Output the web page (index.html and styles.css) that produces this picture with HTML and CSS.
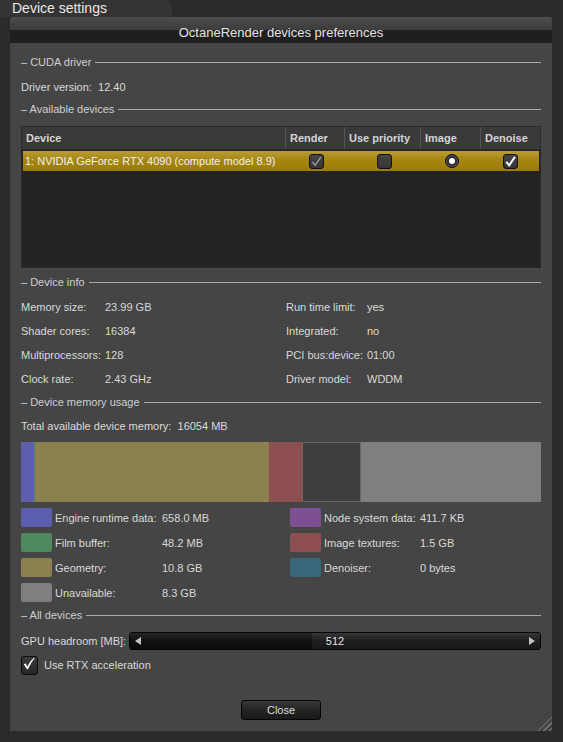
FILE: index.html
```html
<!DOCTYPE html>
<html lang="en">
  <head>
    <meta charset="utf-8">
    <title>Device settings</title>
    <link rel="stylesheet" href="styles.css">
  </head>
  <body>
    <div class="window-tab">Device settings</div>

    <div class="dialog">
      <div class="titlebar">OctaneRender devices preferences</div>

      <div class="content">
        <div class="group-title cuda"><span>– CUDA driver</span></div>
        <div class="driver-row">Driver version:&nbsp; 12.40</div>

        <div class="group-title devices"><span>– Available devices</span></div>
        <div class="device-table">
          <div class="table-head">
            <div class="th">Device</div>
            <div class="th">Render</div>
            <div class="th">Use priority</div>
            <div class="th">Image</div>
            <div class="th">Denoise</div>
          </div>
          <div class="table-row selected">
            <div class="td name">1: NVIDIA GeForce RTX 4090 (compute model 8.9)</div>
            <div class="td center">
              <span class="check">
                <svg width="13" height="13" viewBox="0 0 13 13"><path d="M2.5 7 L5.2 10.3 L10.8 2.2" fill="none" stroke="#9a9a9a" stroke-width="1.4"/></svg>
              </span>
            </div>
            <div class="td center"><span class="check"></span></div>
            <div class="td center"><span class="radio"><span class="dot"></span></span></div>
            <div class="td center">
              <span class="check">
                <svg width="13" height="13" viewBox="0 0 13 13"><path d="M2.3 6.8 L5.2 10.4 L11 1.8" fill="none" stroke="#ffffff" stroke-width="2"/></svg>
              </span>
            </div>
          </div>
        </div>

        <div class="group-title info"><span>– Device info</span></div>
        <div class="info-grid">
          <div>Memory size:</div><div>23.99 GB</div><div>Run time limit:</div><div>yes</div>
          <div>Shader cores:</div><div>16384</div><div>Integrated:</div><div>no</div>
          <div>Multiprocessors:</div><div>128</div><div>PCI bus:device:</div><div>01:00</div>
          <div>Clock rate:</div><div>2.43 GHz</div><div>Driver model:</div><div>WDDM</div>
        </div>

        <div class="group-title memory"><span>– Device memory usage</span></div>
        <div class="total-row">Total available device memory:&nbsp; 16054 MB</div>
        <div class="memory-bar">
          <div class="seg engine" style="width: 13px"></div>
          <div class="seg film" style="width: 1px"></div>
          <div class="seg geometry" style="width: 234px"></div>
          <div class="seg textures" style="width: 33px"></div>
          <div class="seg free" style="width: 59px"></div>
          <div class="seg unavailable" style="flex: 1"></div>
        </div>

        <div class="legend">
          <span class="swatch engine"></span><div>Engine runtime data:</div><div>658.0 MB</div>
          <span class="swatch node"></span><div>Node system data:</div><div>411.7 KB</div>

          <span class="swatch film"></span><div>Film buffer:</div><div>48.2 MB</div>
          <span class="swatch textures"></span><div>Image textures:</div><div>1.5 GB</div>

          <span class="swatch geometry"></span><div>Geometry:</div><div>10.8 GB</div>
          <span class="swatch denoiser"></span><div>Denoiser:</div><div>0 bytes</div>

          <span class="swatch unavailable"></span><div>Unavailable:</div><div>8.3 GB</div>
          <span></span><div></div><div></div>
        </div>

        <div class="group-title all"><span>– All devices</span></div>
        <div class="headroom-row">
          <div class="headroom-label">GPU headroom [MB]:</div>
          <div class="slider">
            <div class="slider-fill"></div>
            <span class="arrow left"></span>
            <span class="slider-value">512</span>
            <span class="arrow right"></span>
          </div>
        </div>
        <div class="rtx-row">
          <span class="big-check">
            <svg width="20" height="20" viewBox="0 0 20 20"><path d="M2.5 10.5 L4.6 9 L7.4 13.2 C10 8 12.6 4.5 16 1.8 L16.8 2.6 C13.6 6 11 10.4 8 17 L6.6 17 Z" fill="#ffffff"/></svg>
          </span>
          <span>Use RTX acceleration</span>
        </div>

        <div class="button-row">
          <button class="close-btn">Close</button>
        </div>
      </div>

      <span class="grip"></span>
    </div>
  </body>
</html>
```

FILE: styles.css
```css
body {
    margin: 0;
    background-color: #2b2b2b;
    font-family: "Liberation Sans", Arial, sans-serif;
    font-size: 11px;
    color: #d9d9d9;
}

.window-tab {
    width: 160px;
    height: 17px;
    padding-left: 12px;
    line-height: 17px;
    font-size: 14px;
    color: #e8e8e8;
    background-color: #343434;
    border-top-right-radius: 9px;
}

.dialog {
    position: relative;
    margin-left: 10px;
    width: 542px;
    background-color: #454545;
    border-top-left-radius: 3px;
    border-top-right-radius: 3px;
}

.titlebar {
    height: 26px;
    box-sizing: border-box;
    padding-top: 5px;
    line-height: 21px;
    text-align: center;
    font-size: 13px;
    color: #e4e4e4;
    background: linear-gradient(#4c4c4c, #3c3c3c 50%, #1f1f1f 50%, #1f1f1f);
    border-top-left-radius: 3px;
    border-top-right-radius: 3px;
}

.content {
    padding: 7px 11px 11px 11px;
}

/* section headers with a rule */
.group-title {
    display: flex;
    align-items: center;
    color: #cfcfcf;
}

.group-title::after {
    content: "";
    flex: 1;
    border-top: 1px solid #a9a9a9;
    margin-left: 4px;
}

.group-title.cuda {
    height: 24px;
}

.group-title.devices {
    height: 18px;
    margin-bottom: 8px;
}

.group-title.info {
    height: 18px;
    margin-top: 5px;
    margin-bottom: 4px;
}

.group-title.memory {
    height: 22px;
}

.group-title.all {
    height: 20px;
}

.driver-row {
    height: 26px;
    line-height: 26px;
}

/* device table */
.device-table {
    height: 142px;
    box-sizing: border-box;
    border: 1px solid #2a2a2a;
    background-color: #232323;
}

.table-head,
.table-row {
    display: grid;
    grid-template-columns: 264px 59px 76px 60px 1fr;
}

.table-head {
    height: 22px;
    background-color: #3a3a3a;
    border-bottom: 1px solid #2a2a2a;
}

.th {
    padding-left: 4px;
    line-height: 22px;
    font-weight: bold;
    color: #d4d4d4;
    border-right: 1px solid #555;
}

.th:last-child {
    border-right: none;
}

.table-row.selected {
    height: 20px;
    margin: 1px 1px 0 1px;
    background: linear-gradient(#b99d34, #a58614 45%, #9b7c00);
    color: #f0f0f0;
}

.td {
    line-height: 20px;
}

.td.name {
    padding-left: 2px;
    white-space: nowrap;
}

.td.center {
    display: flex;
    align-items: center;
    justify-content: center;
}

.check {
    display: flex;
    align-items: center;
    justify-content: center;
    width: 13px;
    height: 13px;
    border: 1px solid #111;
    border-radius: 3px;
    background: linear-gradient(#474747, #333);
}

.radio {
    display: flex;
    align-items: center;
    justify-content: center;
    width: 12px;
    height: 12px;
    border: 1px solid #0c0c0c;
    border-radius: 50%;
    background-color: #2e2e2e;
    box-shadow: inset 0 0 0 1px #5a5a5a;
}

.radio .dot {
    width: 6px;
    height: 6px;
    border-radius: 50%;
    background-color: #fff;
}

/* device info */
.info-grid {
    display: grid;
    grid-template-columns: 84px 181px 81px 1fr;
    grid-auto-rows: 24px;
    align-items: center;
}

.total-row {
    height: 26px;
    line-height: 26px;
    margin-bottom: 3px;
}

.memory-bar {
    display: flex;
    height: 60px;
}

.seg.free {
    box-sizing: border-box;
    border: 1px solid #666;
    background-color: #3f3f3f;
}

.engine { background-color: #5e5eaf; }
.film { background-color: #4e8a5e; }
.geometry { background-color: #8c8051; }
.textures { background-color: #8d4f4f; }
.unavailable { background-color: #7f7f7f; }
.node { background-color: #7e4f91; }
.denoiser { background-color: #3a6679; }

.legend {
    display: grid;
    grid-template-columns: 34px 107px 128px 34px 96px 1fr;
    grid-auto-rows: 25px;
    align-items: center;
    margin-top: 3px;
}

.swatch {
    width: 31px;
    height: 19px;
    border-radius: 2px;
}

/* headroom slider */
.headroom-row {
    display: flex;
    align-items: center;
    height: 18px;
    margin-top: 7px;
}

.headroom-label {
    width: 108px;
}

.slider {
    position: relative;
    flex: 1;
    height: 18px;
    box-sizing: border-box;
    border: 1px solid #050505;
    border-radius: 3px;
    background: linear-gradient(#353535, #202020 45%, #171717);
    display: flex;
    align-items: center;
    justify-content: center;
    overflow: hidden;
}

.slider-fill {
    position: absolute;
    left: 0;
    top: 0;
    bottom: 0;
    width: 182px;
    background: linear-gradient(#262626, #111 45%, #0b0b0b);
}

.slider-value {
    position: relative;
    color: #e2e2e2;
}

.arrow {
    position: absolute;
    top: 4px;
    width: 0;
    height: 0;
    border-top: 4px solid transparent;
    border-bottom: 4px solid transparent;
}

.arrow.left {
    left: 5px;
    border-right: 6px solid #c4c4c4;
}

.arrow.right {
    right: 5px;
    border-left: 6px solid #c4c4c4;
}

.rtx-row {
    display: flex;
    align-items: center;
    gap: 6px;
    height: 18px;
    margin-top: 6px;
}

.big-check {
    display: flex;
    align-items: center;
    justify-content: center;
    width: 15px;
    height: 17px;
    border: 1px solid #0a0a0a;
    border-radius: 3px;
    background: linear-gradient(#3a3a3a, #262626);
    overflow: visible;
}

.big-check svg {
    margin-top: -2px;
}

.button-row {
    display: flex;
    justify-content: center;
    margin-top: 26px;
}

.close-btn {
    width: 80px;
    height: 20px;
    padding: 0;
    margin-left: 0;
    font-family: "Liberation Sans", Arial, sans-serif;
    font-size: 11px;
    color: #dedede;
    border: 1px solid #050505;
    border-radius: 3px;
    background: linear-gradient(#383838, #232323 50%, #1a1a1a);
}

.grip {
    position: absolute;
    right: 0;
    bottom: 0;
    width: 18px;
    height: 18px;
    background: repeating-linear-gradient(135deg, transparent 0, transparent 3px, #7a7a7a 3px, #7a7a7a 4px);
    clip-path: polygon(100% 0, 100% 100%, 0 100%);
}
```
